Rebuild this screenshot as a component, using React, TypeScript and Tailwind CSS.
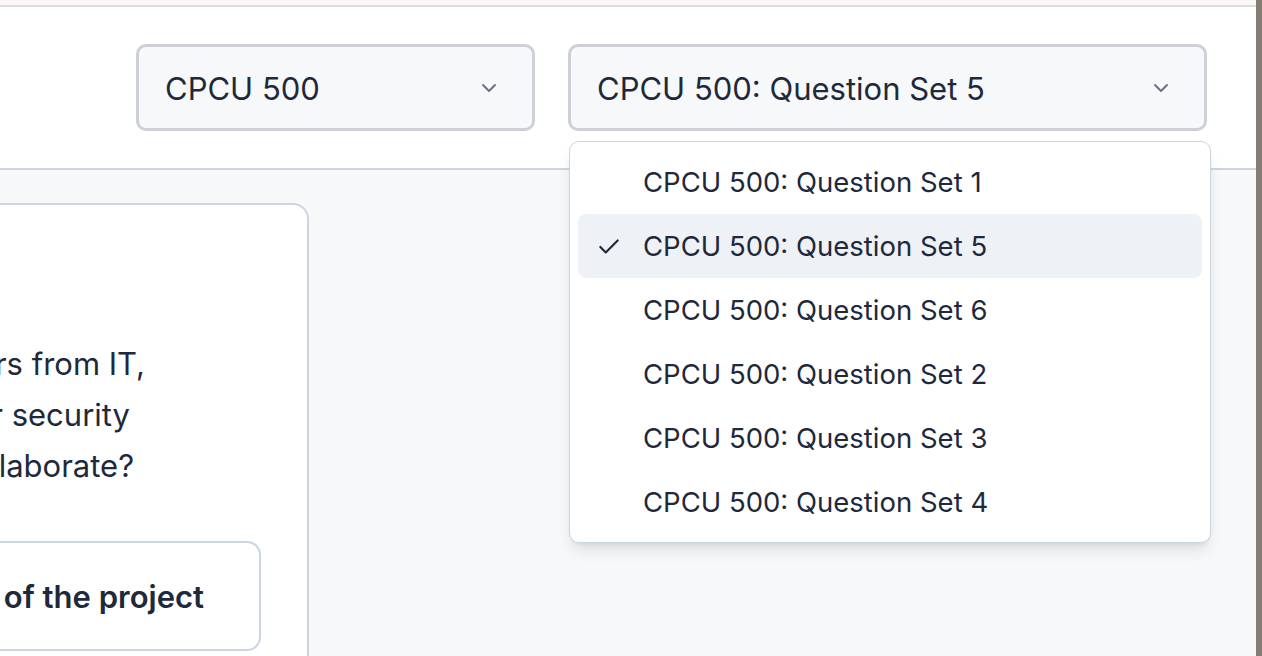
import { Check, ChevronDown } from "lucide-react";

const sets = [
  "CPCU 500: Question Set 1",
  "CPCU 500: Question Set 5",
  "CPCU 500: Question Set 6",
  "CPCU 500: Question Set 2",
  "CPCU 500: Question Set 3",
  "CPCU 500: Question Set 4",
];

function SelectBox({ label, className }: { label: string; className: string }) {
  return (
    <div
      className={`flex h-[87px] items-center justify-between rounded-[10px] border-[3px] border-[#cdd0d7] bg-[#f7f8fa] pl-[26px] pr-[31px] ${className}`}
    >
      <span className="pt-1 text-[31px] text-[#1e293b]">{label}</span>
      <ChevronDown size={24} strokeWidth={2} className="text-[#6b7280]" />
    </div>
  );
}

export default function App() {
  const selected = "CPCU 500: Question Set 5";

  return (
    <div
      className="flex h-screen w-full overflow-hidden bg-[#f7f8fa]"
      style={{ fontFamily: "Inter, 'Noto Sans', sans-serif" }}
    >
      <div className="flex min-w-0 flex-1 flex-col">
        {/* Top strip */}
        <div className="h-[7px] shrink-0 border-b-2 border-[#e0dcdc] bg-[#fbf6f6]" />

        {/* Header with selects */}
        <div className="relative flex h-[163px] shrink-0 items-start justify-end gap-[33px] border-b-2 border-[#cbd5e1] bg-white pr-[49px] pt-[37px]">
          <SelectBox label="CPCU 500" className="w-[399px]" />
          <div className="relative">
            <SelectBox label={selected} className="w-[639px]" />

            {/* Open dropdown */}
            <div className="absolute left-[1px] top-[97px] z-10 w-[642px] rounded-[10px] border border-[#cbd5e1] bg-white p-2 shadow-lg">
              {sets.map((s) => (
                <div
                  key={s}
                  className={`flex h-16 items-center rounded-lg pl-[18px] pt-0.5 text-[27.5px] text-[#1e293b] ${
                    s === selected ? "bg-[#eef1f6]" : ""
                  }`}
                >
                  <span className="w-[47px]">
                    {s === selected && <Check size={26} strokeWidth={2} />}
                  </span>
                  {s}
                </div>
              ))}
            </div>
          </div>
        </div>

        {/* Body */}
        <div className="flex-1 pt-[33px]">
          <div className="-ml-[40px] h-[600px] w-[349px] rounded-2xl border-2 border-[#cbd5e1] bg-white pt-[133px]">
            <div className="text-[31px] leading-[51px] text-[#1e293b]">
              <div className="whitespace-nowrap pr-[162px] text-right">rs from IT,</div>
              <div className="whitespace-nowrap pr-[177px] text-right">r security</div>
              <div className="whitespace-nowrap pr-[173px] text-right">laborate?</div>
            </div>
            <div className="mt-[50px] flex h-[110px] w-[299px] items-center justify-end rounded-[14px] border-2 border-[#cbd5e1] pr-[55px] pt-0.5">
              <span className="whitespace-nowrap text-[31px] font-semibold text-[#1e293b]">
                of the project
              </span>
            </div>
          </div>
        </div>
      </div>

      {/* Right window edge */}
      <div className="w-[6px] shrink-0 bg-[#857d73]" />
    </div>
  );
}
